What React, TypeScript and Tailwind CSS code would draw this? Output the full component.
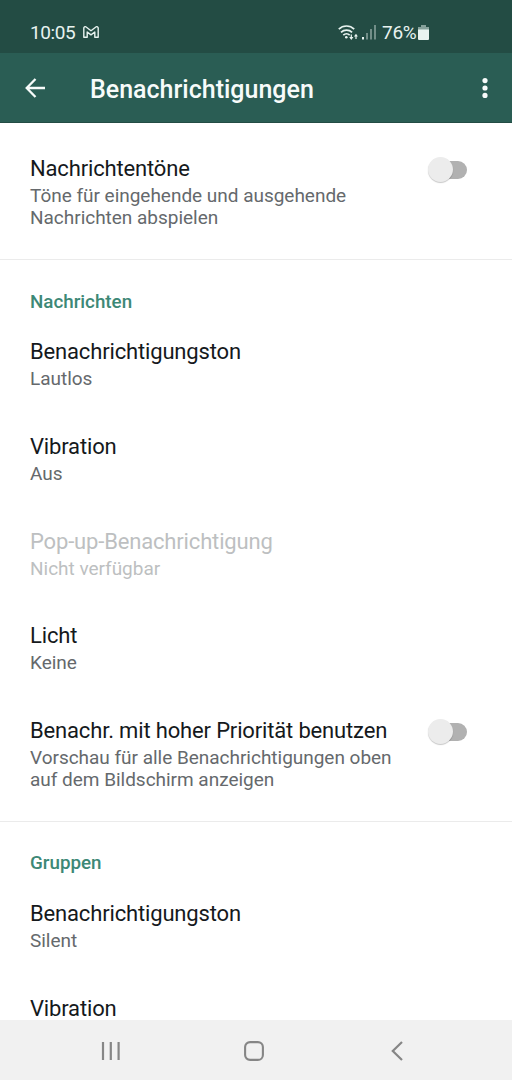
import { clsx } from 'clsx';

interface SettingItemProps {
  title: string;
  summary?: string;
  disabled?: boolean;
  toggle?: boolean;
}

function Toggle() {
  return (
    <div className="relative mt-[0.5px] h-[26px] w-10 shrink-0">
      <div className="absolute top-[4px] right-[0.5px] h-[18px] w-[34px] rounded-full bg-[#b1b1b1]" />
      <div className="absolute top-0 left-[0.5px] size-[25px] rounded-full bg-[#ececec] shadow-[0_1px_1px_rgba(0,0,0,0.22)]" />
    </div>
  );
}

function SettingItem({ title, summary, disabled, toggle }: SettingItemProps) {
  return (
    <div className="flex justify-between pt-[22px] pr-[45px] pb-[21.7px] pl-[30px]">
      <div className="w-[372px]">
        <p
          className={clsx(
            'text-[22px] leading-[26px] tracking-[-0.16px] whitespace-nowrap',
            disabled ? 'text-[#bdbfc1]' : 'text-[#15191c]'
          )}
        >
          {title}
        </p>
        {summary && (
          <p
            className={clsx(
              'mt-[3px] text-[19px] leading-[22px] tracking-[-0.02px]',
              disabled ? 'text-[#bdbfc1]' : 'text-[#65696c]'
            )}
          >
            {summary}
          </p>
        )}
      </div>
      {toggle && <Toggle />}
    </div>
  );
}

function SectionHeader({ children }: { children: string }) {
  return (
    <h2 className="h-[57px] pt-[30.6px] pl-[30px] text-[18.8px] leading-[22px] font-medium text-[#3d8876]">
      {children}
    </h2>
  );
}

function Divider() {
  return <div className="mt-[8.2px] h-px bg-[#ebebeb]" />;
}

function StatusBar() {
  return (
    <div className="flex h-[53px] items-center bg-[#234c44] pt-[13px] pr-[83px] pl-[30px] text-[#e8f3f0]">
      <span className="w-[46px] text-[19px] leading-[22px] tracking-[-0.4px]">10:05</span>
      {/* Gmail */}
      <svg className="mb-[2px] ml-[7px]" width="16" height="12" viewBox="0 0 16 12" fill="none" stroke="currentColor" strokeWidth="1.4" strokeLinejoin="round">
        <path d="M.8 2C.8.8 2.1.3 3.1 1L8 4.7 12.9 1c1-.7 2.3-.2 2.3 1v9.2h-3.4V6L8 8.9 4.2 6v5.2H.8Z" />
      </svg>
      <div className="ml-auto flex items-center">
        {/* Wi-Fi with transfer arrows */}
        <svg width="20" height="16" viewBox="0 0 20 16" fill="none" stroke="currentColor" strokeWidth="1.7">
          <path d="M.8 4.2C5-.1 12-.1 16.2 4.2" />
          <path d="M3 7.3c3.1-3 8-3 11.1 0" />
          <path d="M5.3 10.2c1.8-1.7 4.6-1.7 6.4 0" />
          <circle cx="8.3" cy="12.3" r="1.3" fill="currentColor" stroke="none" />
          <path d="M13.3 9.5v4M18 14v-4" strokeWidth="1.2" />
          <path d="M11.2 12h4.2l-2.1 3ZM15.9 11.5h4L18 8.7Z" fill="currentColor" stroke="none" />
        </svg>
        <svg className="mb-px ml-[4px]" width="14" height="15" viewBox="0 0 14 15" fill="currentColor">
          <path d="M0 12h2v2.5H0Z" />
          <path d="M4 8h2v6.5H4ZM8 4h2v10.5H8ZM12 0h2v14.5h-2Z" opacity=".4" />
        </svg>
        <span className="ml-[6px] w-[36px] text-[19px] leading-[22px] tracking-[-0.3px]">76%</span>
        <svg className="mb-px" width="11" height="15" viewBox="0 0 11 15" fill="currentColor">
          <path d="M3 0h5v2h3v3H0V2h3Z" opacity=".5" />
          <path d="M0 4.5h11V14a1 1 0 0 1-1 1H1a1 1 0 0 1-1-1Z" />
        </svg>
      </div>
    </div>
  );
}

function AppBar() {
  return (
    <div className="flex h-[70px] items-center border-b border-[#234c44] bg-[#2a5d54] pr-[24px] pl-[25px] text-[#f7fbfa]">
      <svg width="21" height="20" viewBox="0 0 21 20" fill="none" stroke="currentColor" strokeWidth="2.3">
        <path d="M20 10H2M10.5 1 1.7 10l8.8 9" />
      </svg>
      <h1 className="ml-[44px] pt-[4px] text-[25px] leading-[30px] font-medium">Benachrichtigungen</h1>
      <svg className="ml-auto" width="6" height="20" viewBox="0 0 6 20" fill="currentColor">
        <circle cx="3" cy="2.6" r="2.6" />
        <circle cx="3" cy="10" r="2.6" />
        <circle cx="3" cy="17.4" r="2.6" />
      </svg>
    </div>
  );
}

function NavBar() {
  return (
    <div className="flex h-[60px] shrink-0 items-center bg-[#f1f1f1] pt-[2px] pl-[101px] text-[#868686]">
      <svg width="20" height="20" viewBox="0 0 20 20" fill="none" stroke="currentColor" strokeWidth="2.2">
        <path d="M2 1v18M9.8 1v18M17.6 1v18" />
      </svg>
      <svg className="ml-[123px]" width="20" height="20" viewBox="0 0 20 20" fill="none" stroke="currentColor" strokeWidth="2.1">
        <rect x="1.1" y="1.1" width="17.8" height="17.8" rx="5" />
      </svg>
      <svg className="ml-[127px]" width="12" height="20" viewBox="0 0 12 20" fill="none" stroke="currentColor" strokeWidth="2.2">
        <path d="M11 1 1.8 10l9.2 9" />
      </svg>
    </div>
  );
}

export default function App() {
  return (
    <div className="flex h-[1080px] w-[512px] flex-col overflow-hidden bg-white font-[Roboto,sans-serif]">
      <StatusBar />
      <AppBar />
      <main className="min-h-0 flex-1 overflow-hidden pt-[11.4px]">
        <SettingItem
          title="Nachrichtentöne"
          summary="Töne für eingehende und ausgehende Nachrichten abspielen"
          toggle
        />
        <Divider />
        <SectionHeader>Nachrichten</SectionHeader>
        <SettingItem title="Benachrichtigungston" summary="Lautlos" />
        <SettingItem title="Vibration" summary="Aus" />
        <SettingItem title="Pop-up-Benachrichtigung" summary="Nicht verfügbar" disabled />
        <SettingItem title="Licht" summary="Keine" />
        <SettingItem
          title="Benachr. mit hoher Priorität benutzen"
          summary="Vorschau für alle Benachrichtigungen oben auf dem Bildschirm anzeigen"
          toggle
        />
        <Divider />
        <SectionHeader>Gruppen</SectionHeader>
        <SettingItem title="Benachrichtigungston" summary="Silent" />
        <SettingItem title="Vibration" />
      </main>
      <NavBar />
    </div>
  );
}
